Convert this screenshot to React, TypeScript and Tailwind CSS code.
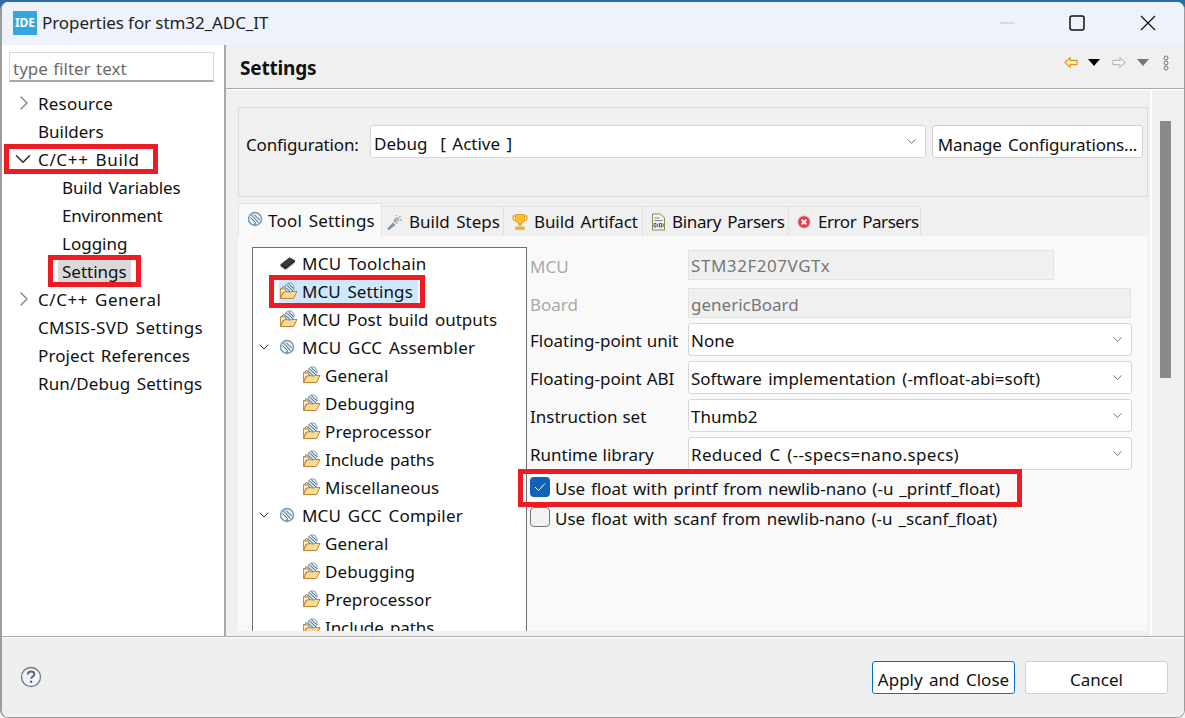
import React from "react";
import { ChevronDown, ChevronRight } from "lucide-react";

const ToolIcon = () => (
  <svg width="16" height="16" viewBox="0 0 16 16" className="shrink-0">
    <circle cx="8" cy="8" r="6.5" fill="#e6eff6" stroke="#6d9ab8" strokeWidth="1.4" />
    <path d="M4.500 4L11.500 11.500M7 3.500L12.500 9M3.500 6.500L8.500 11.500" stroke="#3d5f78" strokeWidth="1" />
    <circle cx="8" cy="13" r="1" fill="#4a87ad" />
  </svg>
);
const FolderTool = () => (
  <svg width="19" height="18" viewBox="0 0 19 18" className="shrink-0">
    <path d="M1.500 15V6.500h2V5h3" fill="#fbe3b0" stroke="#b8813a" strokeWidth="1" />
    <path d="M1.500 16.500L5 9.500h13l-3.500 7z" fill="#fbd98f" stroke="#bd8338" strokeWidth="1" />
    <path d="M1.500 16V7h5v3H4z" fill="#fdf0d2" stroke="#bd8338" strokeWidth="0.8" />
    <circle cx="10.500" cy="5.500" r="4.600" fill="#e6eef5" stroke="#6f97b5" strokeWidth="1" />
    <path d="M7.500 3l6 5.500M9.500 2l5 4.500M6.500 5.500l4.500 4" stroke="#32566f" strokeWidth="1" />
  </svg>
);
const ChipIcon = () => (
  <svg width="18" height="16" viewBox="0 0 18 16" className="shrink-0">
    <path d="M1.500 9.500L10.500 2.500L16 5.500L16 7L6.500 14.500L1.500 11z" fill="#262626" />
    <path d="M1.500 9.500L10.500 2.500L16 5.500L7 12z" fill="#3a3a3a" />
    <path d="M2 12l4.500 3 9-7" stroke="#b5b5b5" strokeWidth="1" fill="none" />
  </svg>
);
const StepsIcon = () => (
  <svg width="18" height="18" viewBox="0 0 18 18" className="shrink-0">
    <path d="M2 16L8 9.500L10.500 12L4 17z" fill="#7d92a8" />
    <path d="M8 8l3-4 5 1-3 1 2 2-3 0 1 3-3-1z" fill="#a9b7c5" />
    <path d="M11 3l1-1M14 4l2-1M15 7l2 0" stroke="#8a9cad" strokeWidth="1" />
  </svg>
);
const TrophyIcon = () => (
  <svg width="16" height="18" viewBox="0 0 16 18" className="shrink-0">
    <path d="M3.500 1.500h9v5c0 2.500-2 4-4.500 4s-4.500-1.500-4.500-4z" fill="#fbbf3b" stroke="#e3a11f" />
    <path d="M3.500 3H1v2c0 1.600 1.200 2.600 3 2.800M12.500 3H15v2c0 1.600-1.200 2.600-3 2.800" fill="none" stroke="#eeab26" strokeWidth="1.3" />
    <path d="M6.500 10.500h3v2.500h-3z" fill="#e9a823" />
    <path d="M3.500 14h9v2.500h-9z" fill="#f5b52f" stroke="#d99a1c" strokeWidth="0.6" />
  </svg>
);
const BinaryIcon = () => (
  <svg width="15" height="18" viewBox="0 0 15 18" className="shrink-0">
    <path d="M1.500 1h8l4 4v12h-12z" fill="#f8f3df" stroke="#8f8758" />
    <path d="M3.500 5h5M3.500 7.500h8" stroke="#6d86b8" strokeWidth="1" />
    <path d="M3 10.500h2v3.500H3zM8.500 10.500h2v3.500h-2z" fill="none" stroke="#394a78" strokeWidth="0.9" />
    <path d="M6.800 10.500V14M12.200 10.500V14" stroke="#394a78" strokeWidth="0.9" />
  </svg>
);
const ErrorIcon = () => (
  <svg width="14" height="14" viewBox="0 0 14 14" className="shrink-0">
    <circle cx="7" cy="7" r="6" fill="#e2404f" stroke="#d98b93" strokeWidth="0.8" />
    <path d="M4.600 4.600l4.800 4.800M9.400 4.600L4.600 9.400" stroke="#fff" strokeWidth="1.800" />
  </svg>
);

const NavRow = ({ label, level = 0, chevron, selected, cls = "" }: { label: string; level?: number; chevron?: "r" | "d"; selected?: boolean; cls?: string }) => (
  <div className={`relative flex h-7 items-center ${level === 0 ? "pl-[36px]" : "pl-[60px]"}`}>
    {chevron === "r" && <ChevronRight size={24} strokeWidth={1.3} className="absolute left-[10px] text-[#808080]" />}
    {chevron === "d" && <ChevronDown size={26} strokeWidth={1.5} className="absolute left-[8px] text-[#333]" />}
    <span className={`${selected ? "-ml-[4px] flex h-[22px] items-center bg-[#d9d9d9] px-[4px]" : ""} ${cls}`}>{label}</span>
  </div>
);

const TreeRow = ({ label, icon, level = 0, chevron, selected, cls = "tracking-[0.1px]" }: { label: string; icon: React.ReactNode; level?: number; chevron?: boolean; selected?: boolean; cls?: string }) => (
  <div className={`relative flex h-7 shrink-0 items-center ${level === 0 ? "pl-[26px]" : "pl-[49px]"}`}>
    {chevron && <ChevronDown size={16} strokeWidth={1.5} className="absolute left-[3px] text-[#333]" />}
    <span className={`flex h-[23px] items-center pr-[5px] ${selected ? "bg-[#cde8ff]" : ""}`}>
      <span className="flex w-[23px] items-center">{icon}</span>
      <span className={cls}>{label}</span>
    </span>
  </div>
);

const Combo = ({ text, className, cls = "" }: { text: string; className: string; cls?: string }) => (
  <div className={`flex items-center justify-between rounded-[3px] border border-[#d6d6d6] bg-white pl-[2px] pr-[6px] ${className}`}>
    <span className={cls}>{text}</span>
    <ChevronDown size={15} strokeWidth={1.2} className="text-[#444]" />
  </div>
);

const Tab = ({ w, icon, label, pl, cls = "" }: { w: string; icon: React.ReactNode; label: string; pl: string; cls?: string }) => (
  <div className={`${w} ${pl} flex h-[30px] items-center gap-[6px] whitespace-nowrap border-r border-t border-[#e2e2e2] bg-[#f0f0f0]`}>
    {icon}
    <span className={cls}>{label}</span>
  </div>
);

const FormRow = ({ label, disabled, children, h = "h-[38px]", cls = "" }: { label: string; disabled?: boolean; children: React.ReactNode; h?: string; cls?: string }) => (
  <div className={`flex ${h} items-center`}>
    <span className={`w-[158px] shrink-0 [word-spacing:0.5px] ${disabled ? "text-[#a9a9a9]" : ""} ${cls}`}>{label}</span>
    {children}
  </div>
);

export default function App() {
  const font = "font-['Noto_Sans',sans-serif]";
  const formCombo = "-mt-[2px] h-[33px] w-[444px]";
  return (
    <div className={`relative h-[718px] w-[1185px] overflow-hidden bg-[linear-gradient(#2a6ca8_0,#2a6ca8_50%,#f4f4f4_50%)] text-[17px] leading-none text-[#111] [word-spacing:2px] ${font}`}>
      <div className="mt-[2px] flex h-[716px] flex-col overflow-hidden rounded-[8px] border-b border-l-2 border-r border-[#9c9c9c] bg-[#f0f0f0]">
        {/* title bar */}
        <div className="flex h-[43px] shrink-0 items-center bg-[#eef3fb] pb-[2px] pl-[11px]">
          <div className="flex h-[24px] w-[24px] items-center justify-center bg-[#36a6de] text-[12px] font-bold text-white [word-spacing:0]">IDE</div>
          <span className="ml-[5px] flex-1 tracking-[-0.08px] text-[#222] [word-spacing:0]">Properties for stm32_ADC_IT</span>
          <svg width="15" height="2" viewBox="0 0 15 2" className="mr-[54px]"><path d="M0 1h15" stroke="#c4c4c4" strokeWidth="1.200" /></svg>
          <svg width="16" height="16" viewBox="0 0 16 16" className="mr-[55px]"><rect x="1" y="1" width="14" height="14" rx="2" fill="none" stroke="#111" strokeWidth="1.500" /></svg>
          <svg width="16" height="16" viewBox="0 0 16 16" className="mr-[28px]"><path d="M1 1l14 14M15 1L1 15" stroke="#111" strokeWidth="1.300" /></svg>
        </div>

        {/* main */}
        <div className="flex h-[591px] shrink-0">
          {/* nav */}
          <div className="w-[222px] shrink-0 bg-white pt-[7px]">
            <div className="ml-[7px] flex h-[30px] w-[205px] items-center border border-b-2 border-[#d9d9d9] border-b-[#a8a8a8] pl-[3px] pt-[4px] text-[#6b6b6b] [word-spacing:1px]">type filter text</div>
            <div className="mt-[7px]">
              <NavRow label="Resource" chevron="r" cls="tracking-[0.2px]" />
              <NavRow label="Builders" />
              <NavRow label="C/C++ Build" chevron="d" cls="tracking-[0.65px]" />
              <NavRow label="Build Variables" level={1} cls="tracking-[-0.1px]" />
              <NavRow label="Environment" level={1} cls="tracking-[-0.2px]" />
              <NavRow label="Logging" level={1} />
              <NavRow label="Settings" level={1} selected />
              <NavRow label="C/C++ General" chevron="r" cls="tracking-[0.55px]" />
              <NavRow label="CMSIS-SVD Settings" cls="tracking-[0.33px]" />
              <NavRow label="Project References" cls="tracking-[0.1px]" />
              <NavRow label="Run/Debug Settings" cls="tracking-[0.1px]" />
            </div>
          </div>
          <div className="w-[2px] shrink-0 bg-[#a8a8a8]" />

          {/* right */}
          <div className="flex min-w-0 flex-1 flex-col">
            <div className="flex h-[44px] shrink-0 items-center border-b border-[#a8a8a8] pl-[14px] pr-[15px]">
              <span className="flex-1 pt-[4px] text-[19px] font-bold tracking-[-0.2px]">Settings</span>
              <svg width="14" height="13" viewBox="0 0 16 14" className="mb-[8px] mr-[10px]">
                <path d="M1 7l6-5.500V4.500h8v5H7V12.500z" fill="#ffe9a8" stroke="#d99a2b" strokeWidth="1.300" />
              </svg>
              <svg width="12" height="7" viewBox="0 0 12 7" className="mb-[8px] mr-[12px]"><path d="M0 0h12L6 7z" fill="#000" /></svg>
              <svg width="14" height="13" viewBox="0 0 16 14" className="mb-[8px] mr-[11px]">
                <path d="M15 7L9 1.500V4.500H1v5h8V12.500z" fill="#f4f4f4" stroke="#bdbdbd" strokeWidth="1.300" />
              </svg>
              <svg width="12" height="7" viewBox="0 0 12 7" className="mb-[8px] mr-[14px]"><path d="M0 0h12L6 7z" fill="#777" /></svg>
              <svg width="6" height="16" viewBox="0 0 6 16" className="mb-[8px]">
                <circle cx="3" cy="3" r="2" fill="#eee" stroke="#777" /><circle cx="3" cy="8" r="2" fill="#eee" stroke="#777" /><circle cx="3" cy="13" r="2" fill="#eee" stroke="#777" />
              </svg>
            </div>

            <div className="flex h-[547px] border-t border-white">
              {/* content */}
              <div className="w-[926px] shrink-0 border-r-2 border-white pl-[12px] pr-[2px] pt-[17px]">
                {/* configuration group */}
                <div className="flex h-[90px] items-start border border-[#dcdcdc] pl-[7px] pt-[17px]">
                  <span className="mt-[11px] w-[124px] tracking-[-0.15px]">Configuration:</span>
                  <Combo text="Debug  [ Active ]" className="h-[33px] w-[556px] whitespace-pre pl-[3px]" cls="pt-[4px]" />
                  <div className="ml-[6px] flex h-[33px] w-[211px] items-center justify-center rounded-[3px] border border-[#d0d0d0] bg-white pt-[5px] tracking-[-0.17px]">Manage Configurations...</div>
                </div>
                {/* tabs */}
                <div className="mt-[6px] flex h-[33px] items-end">
                  <div className="flex h-[33px] w-[144px] items-center gap-[5px] border-x border-t border-[#e2e2e2] bg-[#f9f9f9] pl-[8px]">
                    <span className="mb-[3px]"><ToolIcon /></span>
                    <span className="tracking-[0.2px]">Tool Settings</span>
                  </div>
                  <Tab w="w-[122px]" pl="pl-[3px]" icon={<StepsIcon />} label="Build Steps" />
                  <Tab w="w-[139px]" pl="pl-[8px]" icon={<TrophyIcon />} label="Build Artifact" cls="tracking-[-0.1px]" />
                  <Tab w="w-[146px]" pl="pl-[8px]" icon={<BinaryIcon />} label="Binary Parsers" cls="tracking-[-0.35px]" />
                  <Tab w="w-[132px]" pl="pl-[8px]" icon={<ErrorIcon />} label="Error Parsers" cls="ml-[1px] tracking-[-0.45px]" />
                </div>
                {/* tab panel */}
                <div className="flex h-[395px] overflow-hidden bg-[#f9f9f9] pl-[14px] pt-[11px]">
                  <div className="flex h-[390px] w-[275px] shrink-0 flex-col overflow-hidden border-x border-t border-[#6e6e6e] bg-white pt-[1px]">
                    <TreeRow label="MCU Toolchain" icon={<ChipIcon />} cls="tracking-[0.25px]" />
                    <TreeRow label="MCU Settings" icon={<FolderTool />} selected />
                    <TreeRow label="MCU Post build outputs" icon={<FolderTool />} cls="tracking-[0px]" />
                    <TreeRow label="MCU GCC Assembler" icon={<ToolIcon />} chevron cls="tracking-[0.25px]" />
                    <TreeRow label="General" icon={<FolderTool />} level={1} />
                    <TreeRow label="Debugging" icon={<FolderTool />} level={1} />
                    <TreeRow label="Preprocessor" icon={<FolderTool />} level={1} />
                    <TreeRow label="Include paths" icon={<FolderTool />} level={1} cls="tracking-[-0.1px]" />
                    <TreeRow label="Miscellaneous" icon={<FolderTool />} level={1} />
                    <TreeRow label="MCU GCC Compiler" icon={<ToolIcon />} chevron cls="tracking-[0.2px]" />
                    <TreeRow label="General" icon={<FolderTool />} level={1} />
                    <TreeRow label="Debugging" icon={<FolderTool />} level={1} />
                    <TreeRow label="Preprocessor" icon={<FolderTool />} level={1} />
                    <TreeRow label="Include paths" icon={<FolderTool />} level={1} cls="tracking-[-0.1px]" />
                  </div>
                  <div className="ml-[3px] w-[602px] shrink-0">
                    <FormRow label="MCU" disabled>
                      <div className="-mt-[3px] flex h-[30px] w-[366px] items-center border border-[#e2e2e2] bg-[#f0f0f0] pl-[2px] pt-[1px] tracking-[0.55px] text-[#777]">STM32F207VGTx</div>
                    </FormRow>
                    <FormRow label="Board" disabled h="h-[36px]" cls="pt-[2px]">
                      <div className="flex h-[30px] w-[443px] items-center border border-[#e2e2e2] bg-[#f0f0f0] pl-[2px] pt-[2px] text-[#777]">genericBoard</div>
                    </FormRow>
                    <FormRow label="Floating-point unit">
                      <Combo text="None" className={formCombo} cls="pt-[2px]" />
                    </FormRow>
                    <FormRow label="Floating-point ABI">
                      <Combo text="Software implementation (-mfloat-abi=soft)" className={formCombo} cls="pt-[2px]" />
                    </FormRow>
                    <FormRow label="Instruction set">
                      <Combo text="Thumb2" className={formCombo} cls="pt-[2px]" />
                    </FormRow>
                    <FormRow label="Runtime library">
                      <Combo text="Reduced C (--specs=nano.specs)" className={formCombo} cls="pt-[2px] tracking-[0.33px]" />
                    </FormRow>
                    <div className="flex h-[30px] items-center gap-[5px] [word-spacing:1.4px]">
                      <span className="-mt-[2px] flex h-[20px] w-[20px] items-center justify-center rounded-[4px] bg-[#0f62b8]">
                        <svg width="12" height="10" viewBox="0 0 12 10"><path d="M1 5l3.500 3.500L11 1.500" fill="none" stroke="#fff" strokeWidth="1" /></svg>
                      </span>
                      <span>Use float with printf from newlib-nano (-u _printf_float)</span>
                    </div>
                    <div className="flex h-[30px] items-center gap-[5px] [word-spacing:1.6px]">
                      <span className="-mt-[2px] h-[20px] w-[20px] rounded-[4px] border border-[#777] bg-[#f2f2f2]" />
                      <span>Use float with scanf from newlib-nano (-u _scanf_float)</span>
                    </div>
                  </div>
                </div>
              </div>
              {/* scroll gutter */}
              <div className="pl-[8px] pt-[31px]">
                <div className="h-[257px] w-[11px] bg-[#8a8a8a]" />
              </div>
            </div>
          </div>
        </div>

        {/* footer */}
        <div className="flex flex-1 items-center border-t border-[#a8a8a8] bg-[#efefef] pl-[18px] pr-[16px] shadow-[inset_0_1px_0_#fff]">
          <svg width="22" height="22" viewBox="0 0 22 22">
            <circle cx="11" cy="11" r="9.500" fill="#f4f4f6" stroke="#6b7a96" strokeWidth="1.300" />
            <path d="M7.800 8.500c0-2 1.500-3 3.300-3s3.200 1 3.200 2.700c0 2.400-3.200 2.300-3.200 4.500" fill="none" stroke="#5c6880" strokeWidth="2" />
            <circle cx="11.100" cy="15.800" r="1.300" fill="#5c6880" />
          </svg>
          <div className="ml-auto flex h-[33px] w-[143px] items-center justify-center rounded-[3px] border border-[#0a6cc4] bg-white pt-[4px]">Apply and Close</div>
          <div className="ml-[10px] flex h-[33px] w-[143px] items-center justify-center rounded-[3px] border border-[#d0d0d0] bg-white pt-[4px]">Cancel</div>
        </div>
      </div>

      {/* annotation overlays */}
      <div className="absolute left-[4px] top-[144px] h-[30px] w-[154px] border-[5px] border-[#ed1c24]" />
      <div className="absolute left-[48px] top-[255px] h-[32px] w-[93px] border-[5px] border-[#ed1c24]" />
      <div className="absolute left-[269px] top-[275px] h-[33px] w-[156px] border-[5px] border-[#ed1c24]" />
      <div className="absolute left-[518px] top-[469px] h-[38px] w-[504px] border-[5px] border-[#ed1c24]" />
    </div>
  );
}
